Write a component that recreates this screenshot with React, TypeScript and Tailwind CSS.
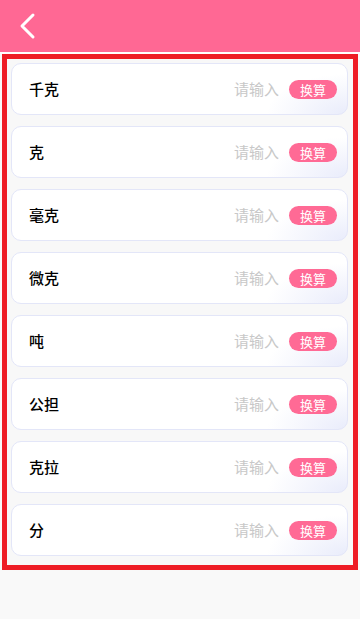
import { useState } from "react";

const UNITS = ["千克", "克", "毫克", "微克", "吨", "公担", "克拉", "分"];

function UnitRow({ name }: { name: string }) {
  const [value, setValue] = useState("");
  return (
    <div className="h-[52px] flex items-center rounded-[10px] border border-[#e3e6f8] bg-[radial-gradient(ellipse_80px_40px_at_100%_100%,#e9ecfb,#ffffff)] pl-[17px] pr-[10px]">
      <span className="text-[15px] font-medium text-black flex-1">{name}</span>
      <input
        value={value}
        onChange={(e) => setValue(e.target.value)}
        placeholder="请输入"
        className="w-[60px] text-right text-[15px] text-black placeholder:text-[#c8c8c8] bg-transparent outline-none"
      />
      <button className="ml-[10px] h-[19px] w-[48px] rounded-full bg-[#ff6a95] text-white text-[13px] leading-[19px]">
        换算
      </button>
    </div>
  );
}

export default function App() {
  return (
    <div
      className="w-[360px] h-[619px] flex flex-col bg-[#f9f9f9] overflow-hidden"
      style={{ fontFamily: '"Noto Sans CJK SC", "Noto Sans", sans-serif' }}
    >
      <header className="h-[52px] shrink-0 bg-[#ff6894] flex items-center pl-[16px]">
        <svg width="24" height="28" viewBox="0 0 24 28" fill="none" aria-label="返回">
          <path d="M17 3 L6 14 L17 25" stroke="white" strokeWidth="3" strokeLinecap="round" strokeLinejoin="round" />
        </svg>
      </header>
      <div className="h-[2px] shrink-0 bg-white" />
      <main className="ml-[2px] mr-[2px] h-[516px] border-[5px] border-[#ee1c25] bg-[#f8f8f8] pt-[4px] pl-[4px] pr-[5px] flex flex-col gap-[11px]">
        {UNITS.map((u) => (
          <UnitRow key={u} name={u} />
        ))}
      </main>
    </div>
  );
}
